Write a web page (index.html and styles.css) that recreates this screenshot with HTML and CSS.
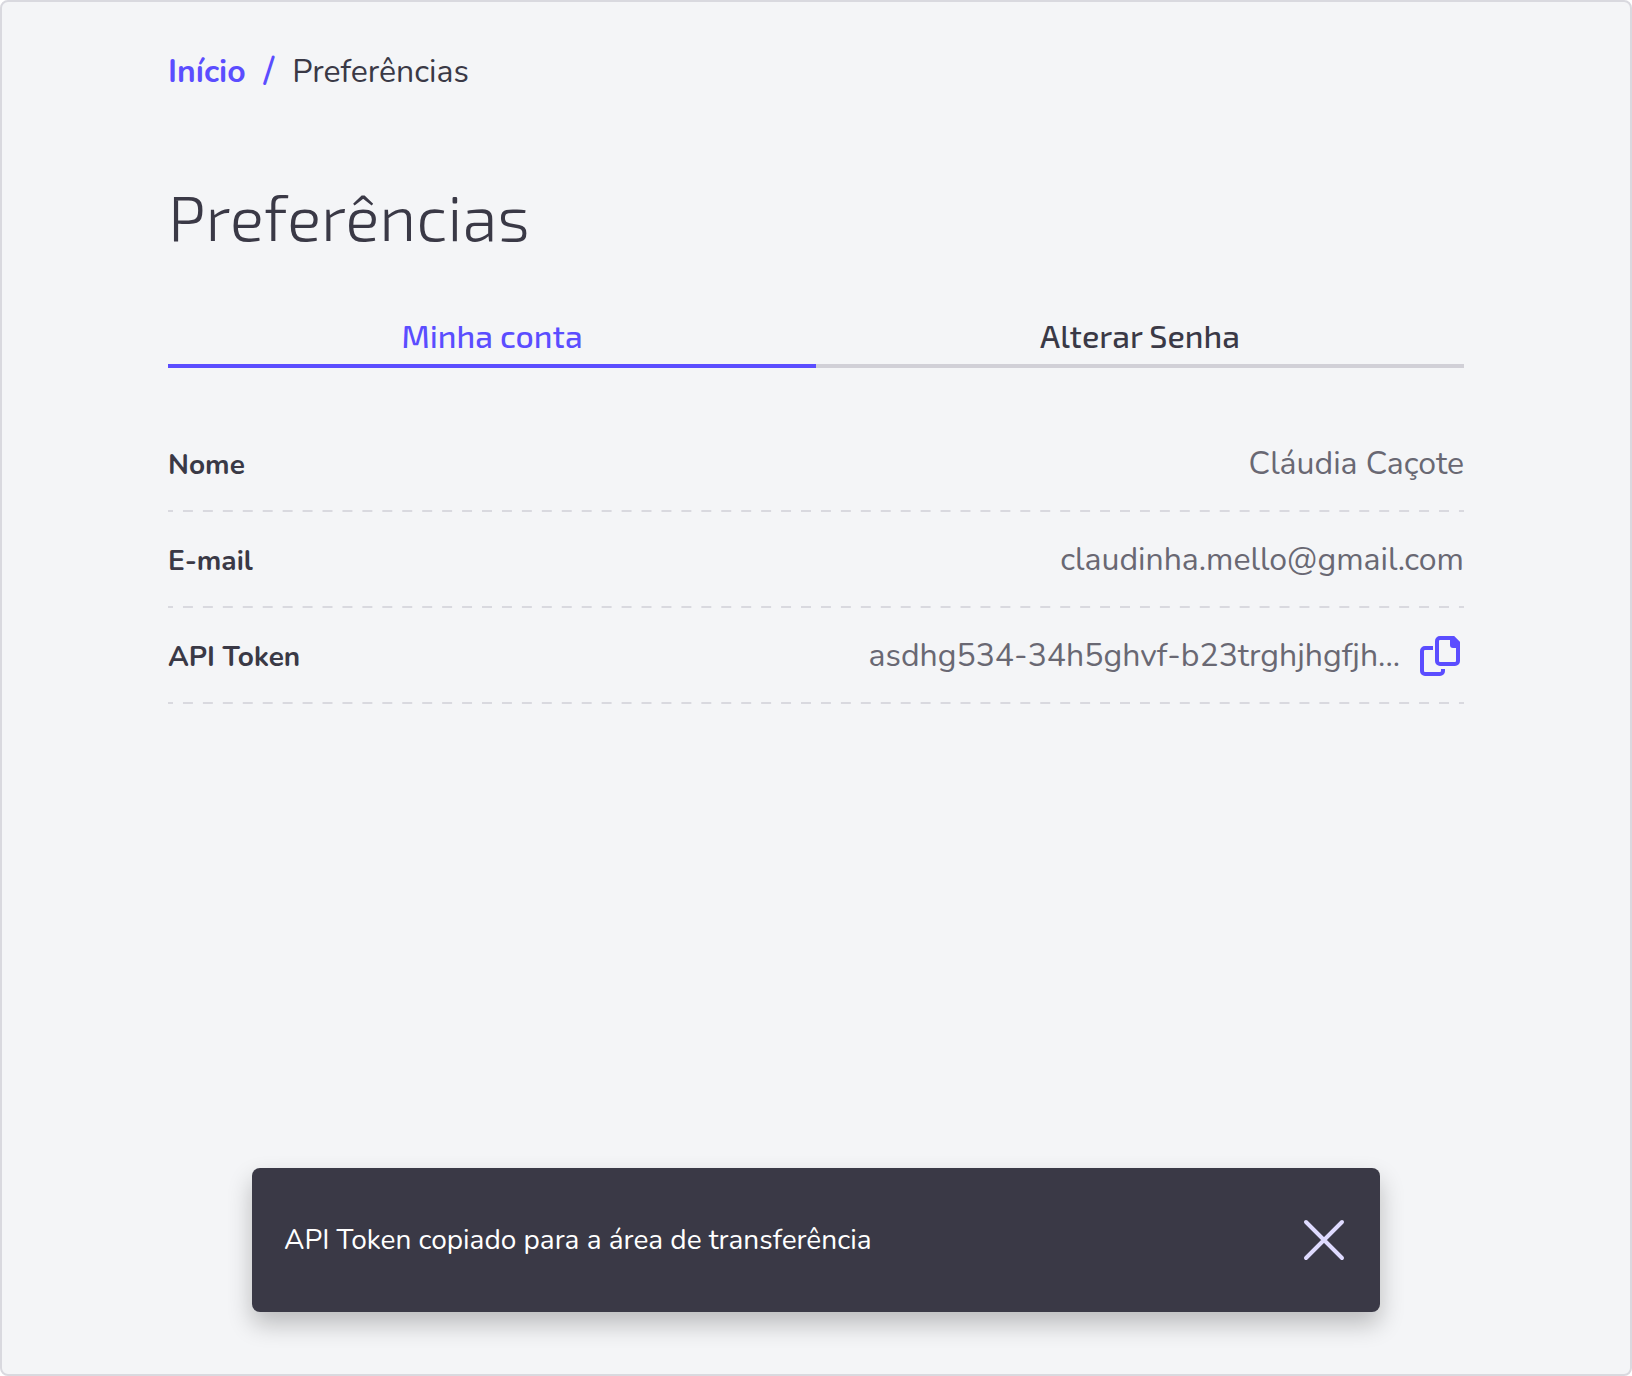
FILE: index.html
```html
<!DOCTYPE html>
<html lang="pt-BR">

<head>
  <meta charset="UTF-8">
  <meta name="viewport" content="width=device-width, initial-scale=1.0">
  <title>Preferências</title>
  <link rel="stylesheet" href="styles.css">
</head>

<body>
  <main class="page">
    <nav class="breadcrumb">
      <a href="#inicio">Início</a>
      <span class="separator">/</span>
      <span>Preferências</span>
    </nav>

    <h1 class="title">Preferências</h1>

    <div class="tabs" role="tablist">
      <button class="tab active" type="button" role="tab" aria-selected="true">Minha conta</button>
      <button class="tab" type="button" role="tab" aria-selected="false">Alterar Senha</button>
    </div>

    <dl class="account">
      <div class="row">
        <dt>Nome</dt>
        <dd>Cláudia Caçote</dd>
      </div>
      <div class="row">
        <dt>E-mail</dt>
        <dd>claudinha.mello@gmail.com</dd>
      </div>
      <div class="row">
        <dt>API Token</dt>
        <dd>asdhg534-34h5ghvf-b23trghjhgfjh...</dd>
        <dd class="action">
          <button class="icon-button" id="copy" type="button" aria-label="Copiar API Token">
            <svg width="48" height="48" viewBox="0 0 48 48" fill="none" stroke="currentColor" stroke-width="4">
              <path d="M17 16H9a3 3 0 0 0-3 3v20a3 3 0 0 0 3 3h15a3 3 0 0 0 3-3v-2" />
              <path d="M24 6h13l5 5v18a3 3 0 0 1-3 3H24a3 3 0 0 1-3-3V9a3 3 0 0 1 3-3z" />
              <path d="M34 4h4l6 6v6h-7a3 3 0 0 1-3-3z" fill="currentColor" stroke="none" />
            </svg>
          </button>
        </dd>
      </div>
    </dl>

    <div class="toast" id="toast" role="status">
      <p>API Token copiado para a área de transferência</p>
      <button class="icon-button" id="close" type="button" aria-label="Fechar">
        <svg width="48" height="48" viewBox="0 0 48 48" fill="none" stroke="currentColor" stroke-width="4" stroke-linecap="round">
          <path d="M6 6l36 36M42 6L6 42" />
        </svg>
      </button>
    </div>
  </main>

  <script>
    const toast = document.getElementById('toast');

    document.getElementById('close').addEventListener('click', () => {
      toast.hidden = true;
    });

    document.getElementById('copy').addEventListener('click', () => {
      toast.hidden = false;
    });
  </script>
</body>

</html>
```
FILE: styles.css
```css
* {
  box-sizing: border-box;
}

body {
  margin: 0;
  background-color: white;
  font-family: Nunito, Lato, sans-serif;
  font-size: 32px;
  line-height: 48px;
  color: #3a3946;
}

.page {
  position: relative;
  min-height: 100vh;
  padding: 46px 166px;
  background-color: #f4f5f7;
  border: 2px solid #d9d9df;
  border-radius: 8px;
}

/* breadcrumb */
.breadcrumb {
  display: flex;
  gap: 18px;
}

.breadcrumb a {
  color: #5b4dff;
  font-weight: bold;
  text-decoration: none;
}

.separator {
  color: #5b4dff;
  font-size: 36px;
  font-weight: 600;
}

.title {
  margin: 80px 0 58px;
  font-family: "Exo 2", "Open Sans", sans-serif;
  font-size: 64px;
  font-weight: 300;
  line-height: 80px;
}

/* tabs */
.tabs {
  display: flex;
}

.tab {
  flex: 1;
  padding: 0 0 8px;
  background: none;
  border: none;
  border-bottom: 4px solid #d1d0d7;
  color: inherit;
  font-family: "Exo 2", "Open Sans", sans-serif;
  font-size: 32px;
  font-weight: 500;
  line-height: 42px;
  cursor: pointer;
}

.tab.active {
  border-color: #5b4dff;
  color: #5b4dff;
}

/* account data */
.account {
  margin: 48px 0 0;
}

.row {
  display: flex;
  align-items: baseline;
  padding: 24px 0;
  background: linear-gradient(90deg, #d9d9df 5px, transparent 5px 15px, #d9d9df 15px) bottom left / 20px 2px;
  background-repeat: round no-repeat;
}

.row dt {
  flex: 1;
  font-size: 28px;
  font-weight: bold;
  line-height: 40px;
}

.row dd {
  margin: 0;
  color: #696873;
}

.row .action {
  align-self: center;
  margin-left: 16px;
}

.icon-button {
  display: block;
  padding: 0;
  background: none;
  border: none;
  color: #5b4dff;
  cursor: pointer;
}

.icon-button svg {
  display: block;
}

/* toast */
.toast {
  position: absolute;
  right: 250px;
  bottom: 62px;
  left: 250px;
  display: flex;
  align-items: center;
  justify-content: space-between;
  padding: 48px 32px;
  background-color: #3a3946;
  border-radius: 8px;
  box-shadow: 0 12px 24px rgba(0, 0, 0, 0.24);
  color: white;
  font-size: 28px;
}

.toast[hidden] {
  display: none;
}

.toast p {
  margin: 0;
}

.toast .icon-button {
  color: #dfdbff;
}
```
